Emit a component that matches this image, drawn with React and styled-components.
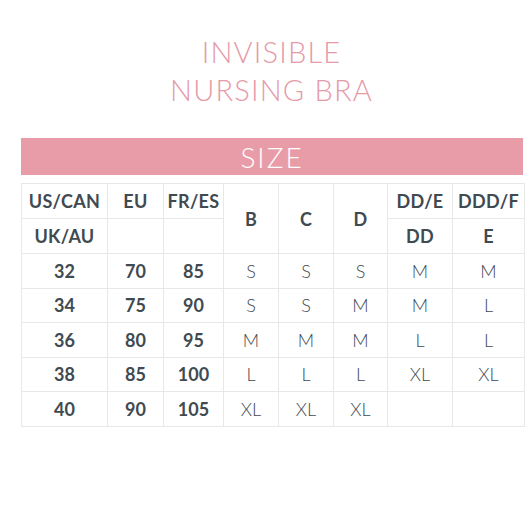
import React from 'react'
import styled, { createGlobalStyle } from 'styled-components'

const GlobalStyle = createGlobalStyle`
    body {
        margin: 0;
        background: #fff;
        font-family: Lato, 'Open Sans', sans-serif;
    }
`

const rows = [
    ['32', '70', '85', 'S', 'S', 'S', 'M', 'M'],
    ['34', '75', '90', 'S', 'S', 'M', 'M', 'L'],
    ['36', '80', '95', 'M', 'M', 'M', 'L', 'L'],
    ['38', '85', '100', 'L', 'L', 'L', 'XL', 'XL'],
    ['40', '90', '105', 'XL', 'XL', 'XL', '', ''],
]

const widths = [86, 56, 60, 55, 55, 54, 65, 72]

export default function App() {
    return (
        <>
            <GlobalStyle />
            <Page>
                <Title>INVISIBLE<br />NURSING BRA</Title>
                <SizeBar>SIZE</SizeBar>
                <Table>
                    <colgroup>
                        {widths.map((w, i) => <col key={i} style={{ width: w }} />)}
                    </colgroup>
                    <tbody>
                        <HeadRow>
                            <Head>US/CAN</Head>
                            <Head>EU</Head>
                            <Head>FR/ES</Head>
                            <Head rowSpan={2}>B</Head>
                            <Head rowSpan={2}>C</Head>
                            <Head rowSpan={2}>D</Head>
                            <Head>DD/E</Head>
                            <Head>DDD/F</Head>
                        </HeadRow>
                        <HeadRow>
                            <Head>UK/AU</Head>
                            <Head />
                            <Head />
                            <Head>DD</Head>
                            <Head>E</Head>
                        </HeadRow>
                        {rows.map((r, i) => (
                            <Row key={i}>
                                {r.map((v, j) => (
                                    <Cell key={j} light={j > 2}>{v}</Cell>
                                ))}
                            </Row>
                        ))}
                    </tbody>
                </Table>
            </Page>
        </>
    )
}

const Page = styled.div`
    width: 532px;
    height: 532px;
    padding: 33px 8px 0 21px;
    box-sizing: border-box;
    display: flex;
    flex-direction: column;
    align-items: flex-start;
`
const Title = styled.h1`
    margin: 0;
    align-self: center;
    margin-right: 2px;
    font-family: Lato, sans-serif;
    font-weight: 300;
    font-size: 29px;
    line-height: 38px;
    letter-spacing: 1.2px;
    color: #e59aa8;
    text-align: center;
`
const SizeBar = styled.div`
    margin-top: 29px;
    width: 502px;
    height: 37px;
    background: #e79ca7;
    color: #fff;
    font-family: Lato, sans-serif;
    font-weight: 300;
    font-size: 28px;
    letter-spacing: 2px;
    line-height: 38px;
    text-align: center;
`
const Table = styled.table`
    margin-top: 8px;
    width: 503px;
    table-layout: fixed;
    border-collapse: collapse;
    border: 1px solid #e6e6e6;
    color: #3f4a51;
`
const HeadRow = styled.tr`
    height: 35px;
`
const Head = styled.td`
    border: 1px solid #e8e8e8;
    padding: 0;
    text-align: center;
    font-weight: 700;
    font-size: 18px;
    letter-spacing: 0.3px;
    white-space: nowrap;
`
const Row = styled.tr`
    height: 34.5px;
`
const Cell = styled.td`
    border: 1px solid #e8e8e8;
    padding: 0;
    text-align: center;
    font-size: 18px;
    font-weight: ${({ light }) => light ? 300 : 700};
`
